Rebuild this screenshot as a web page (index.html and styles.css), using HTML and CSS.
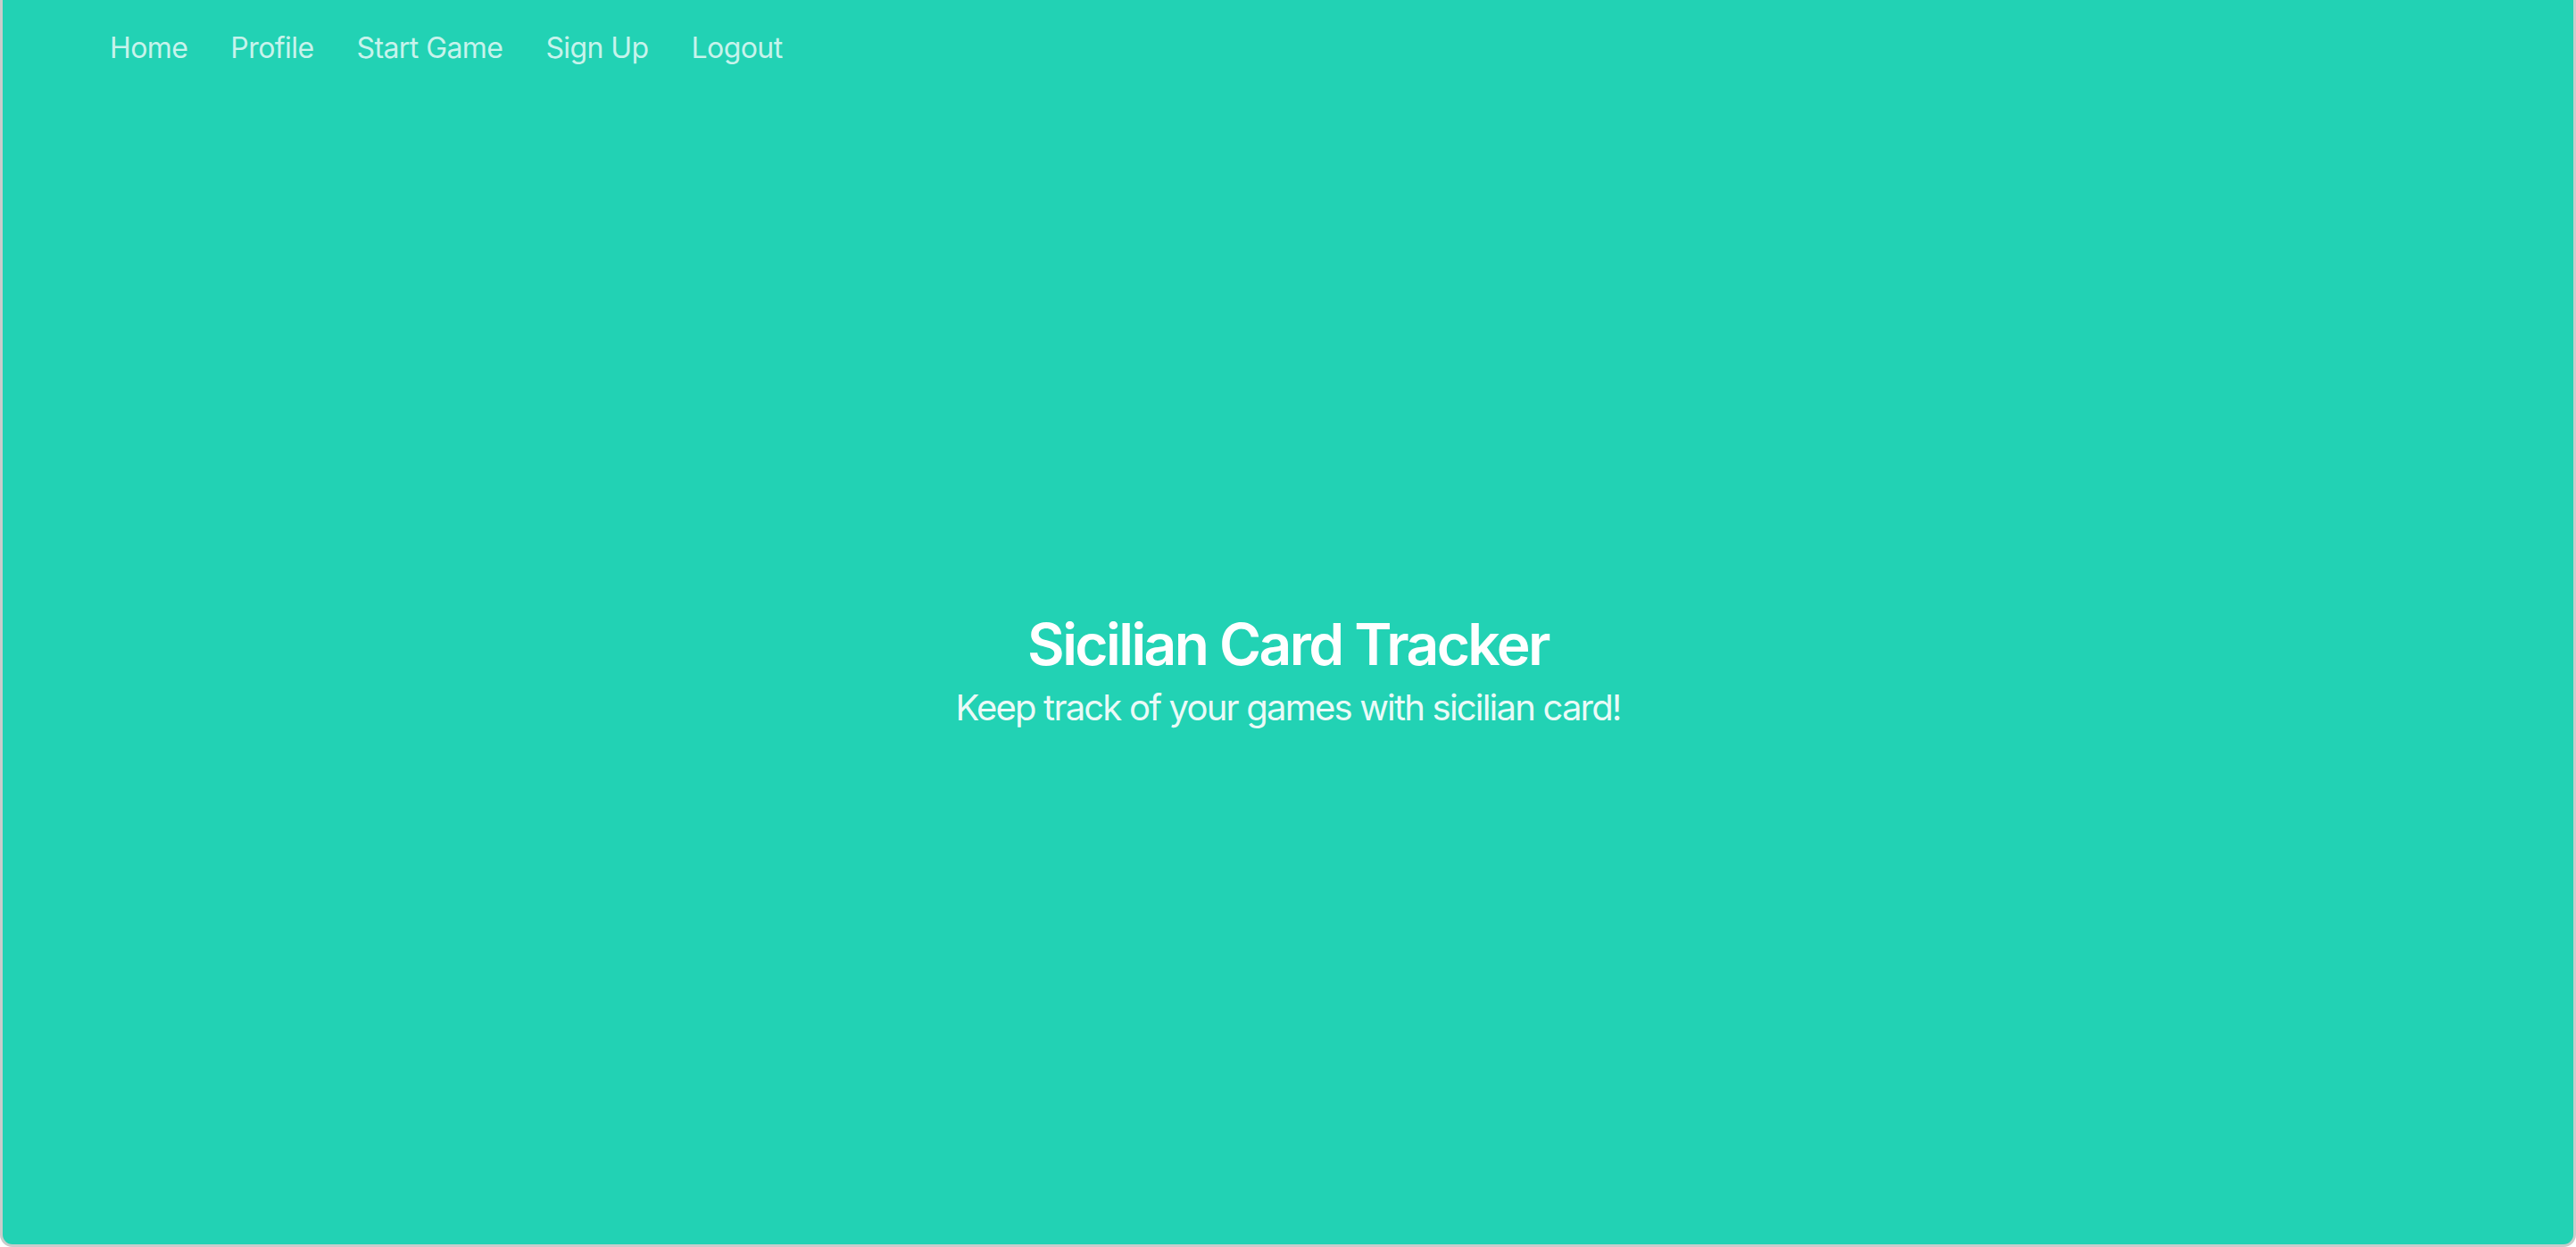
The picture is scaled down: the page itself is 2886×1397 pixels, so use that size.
FILE: index.html
```html
<!DOCTYPE html>
<html lang="en">
<head>
<meta charset="utf-8">
<title>Sicilian Card Tracker</title>
<link rel="stylesheet" href="styles.css">
</head>
<body>
<section class="hero">
  <nav class="navbar">
    <div class="container">
      <a class="navbar-item" href="#">Home</a>
      <a class="navbar-item" href="#">Profile</a>
      <a class="navbar-item" href="#">Start Game</a>
      <a class="navbar-item" href="#">Sign Up</a>
      <a class="navbar-item" href="#">Logout</a>
    </div>
  </nav>
  <div class="hero-body">
    <h1 class="title">Sicilian Card Tracker</h1>
    <h2 class="subtitle">Keep track of your games with sicilian card!</h2>
  </div>
</section>
</body>
</html>
```
FILE: styles.css
```css
html, body {
  margin: 0;
  padding: 0;
  background: #ffffff;
}
body {
  font-family: Inter, "Noto Sans", sans-serif;
}
.hero {
  box-sizing: border-box;
  height: 1397px;
  background: #22d2b4;
  border: 3px solid #c9cccb;
  border-top: none;
  border-radius: 0 0 14px 14px;
  display: flex;
  flex-direction: column;
}
.navbar {
  height: 104px;
  padding-top: 4px;
  box-sizing: border-box;
  flex: none;
}
.container {
  width: 2688px;
  margin: 0 auto;
  height: 100%;
  display: flex;
  align-items: center;
}
.navbar-item {
  display: block;
  padding: 0 24px;
  font-size: 32px;
  line-height: 1.5;
  letter-spacing: -0.018em;
  color: rgba(255, 255, 255, 0.75);
  text-decoration: none;
}
.hero-body {
  flex: 1;
  display: flex;
  flex-direction: column;
  align-items: center;
  justify-content: center;
  padding-top: 6px;
}
.title {
  margin: 0;
  font-size: 64px;
  font-weight: 600;
  line-height: 1.125;
  letter-spacing: -0.04em;
  color: #ffffff;
}
.subtitle {
  margin: 10px 0 0;
  font-size: 40px;
  font-weight: 400;
  line-height: 1.25;
  letter-spacing: -0.045em;
  color: rgba(255, 255, 255, 0.92);
}
```
